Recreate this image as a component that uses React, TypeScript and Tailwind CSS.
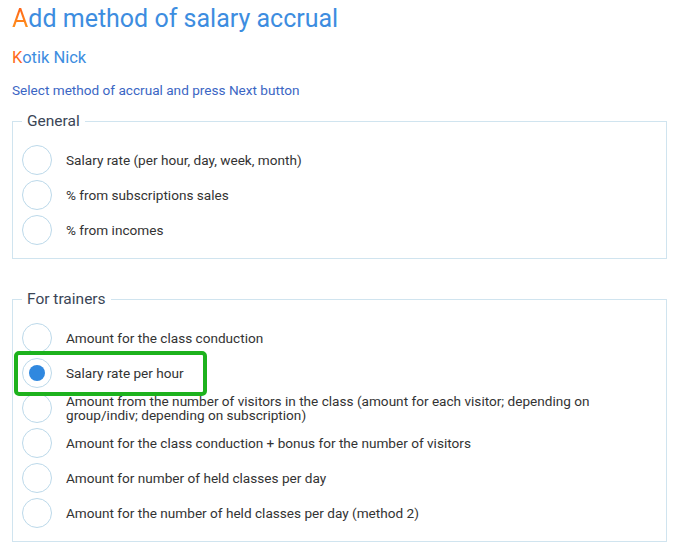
const general = [
  "Salary rate (per hour, day, week, month)",
  "% from subscriptions sales",
  "% from incomes",
];

const trainers = [
  "Amount for the class conduction",
  "Salary rate per hour",
  "Amount from the number of visitors in the class (amount for each visitor; depending on group/indiv; depending on subscription)",
  "Amount for the class conduction + bonus for the number of visitors",
  "Amount for number of held classes per day",
  "Amount for the number of held classes per day (method 2)",
];

function Radio({ label, checked, highlight }: { label: string; checked?: boolean; highlight?: boolean }) {
  return (
    <label className="relative flex h-[35px] items-center gap-[14px]">
      <span className="flex h-[30px] w-[30px] shrink-0 items-center justify-center rounded-full border border-[#bcd9ea] bg-white">
        {checked && <span className="h-[16px] w-[16px] rounded-full bg-[#3088df]" />}
      </span>
      <span className="pr-16 text-[13.6px] leading-[14px] text-[#333]">{label}</span>
      {highlight && (
        <span className="pointer-events-none absolute left-[-8px] top-[-4px] z-10 h-[45px] w-[193px] rounded-[5px] border-4 border-[#1db21d]" />
      )}
    </label>
  );
}

function Group({ title, items, selected }: { title: string; items: string[]; selected?: number }) {
  return (
    <fieldset className="border border-[#d0e4ef] pb-[11px] pl-[9px]">
      <legend className="px-[5px] text-[15.5px] leading-[20px] text-[#3a4556]">{title}</legend>
      <div className="mt-[11px]">
        {items.map((t, i) => (
          <Radio key={i} label={t} checked={i === selected} highlight={i === selected} />
        ))}
      </div>
    </fieldset>
  );
}

export default function App() {
  return (
    <div className="min-h-[546px] bg-white pl-3 pr-2 pt-[2px]" style={{ fontFamily: "Roboto, 'Liberation Sans', sans-serif" }}>
      <h1 className="text-[25px] leading-[34px] text-[#3d8de0]">
        <span className="bg-gradient-to-b from-[#ff5a1a] to-[#ff9a1a] bg-clip-text text-transparent">A</span>dd method of salary accrual
      </h1>
      <div className="mt-[11px] text-[16.5px] leading-[22px] text-[#3d8de0]">
        <span className="text-[#ff6a1a]">K</span>otik Nick
      </div>
      <p className="mt-[12px] text-[13.6px] leading-[18px] text-[#3b66c4]">Select method of accrual and press Next button</p>
      <div className="mt-[12px]">
        <Group title="General" items={general} />
      </div>
      <div className="mt-[30px]">
        <Group title="For trainers" items={trainers} selected={1} />
      </div>
    </div>
  );
}
